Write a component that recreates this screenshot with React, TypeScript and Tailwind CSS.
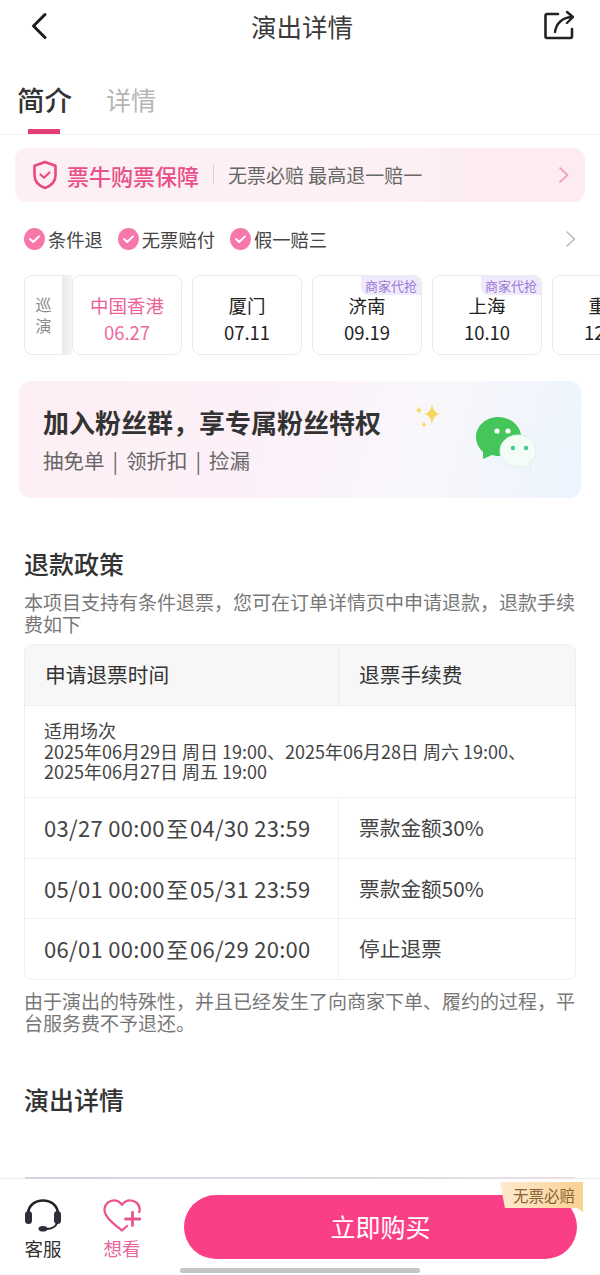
import React from "react";

const font = { fontFamily: '"Noto Sans CJK SC", "Noto Sans", sans-serif' };

function Check() {
  return (
    <svg width="21" height="22" viewBox="0 0 21 22" className="shrink-0">
      <ellipse cx="10.500" cy="11" rx="10.500" ry="11" fill="#f777ab" />
      <path d="M6 11l3.200 3 5.800-5.600" fill="none" stroke="#fff" strokeWidth="2" strokeLinecap="round" strokeLinejoin="round" />
    </svg>
  );
}

function Tag({ text }: { text: string }) {
  return (
    <div className="flex items-center gap-[3px]">
      <Check />
      <span className="text-[18.300px] leading-6 text-[#444]">{text}</span>
    </div>
  );
}

function City({ name, date, active, badge }: { name: string; date: string; active?: boolean; badge?: boolean }) {
  return (
    <div className="relative flex h-[80px] w-[110px] shrink-0 flex-col items-center rounded-lg border border-[#ebebeb] bg-white pt-[16px]">
      {badge && (
        <div className="absolute right-0 top-0 rounded-bl-lg rounded-tr-lg bg-[#efe9fb] px-[4px] text-[13px] leading-[19px] text-[#9a7bd6]">商家代抢</div>
      )}
      <div className={active ? "text-[18.500px] leading-[26px] text-[#ec5f99]" : "text-[18.500px] leading-[26px] text-[#222]"}>{name}</div>
      <div className={active ? "mt-[1px] text-[18.500px] leading-[26px] text-[#ec6b9f]" : "mt-[1px] text-[18.500px] leading-[26px] text-[#222]"}>{date}</div>
    </div>
  );
}

function Row({ from, to, fee }: { from: string; to: string; fee: string }) {
  return (
    <div className="flex h-[60.500px] items-center border-t border-[#f0f0f0]">
      <div className="flex h-full w-[314px] items-center border-r border-[#f0f0f0] pl-[19px] text-[22px] tracking-[0.300px] text-[#444]">
        <span>{from}</span>
        <span className="mx-[1.500px]">至</span>
        <span>{to}</span>
      </div>
      <div className="pl-[20px] text-[20.700px] text-[#444]">{fee}</div>
    </div>
  );
}

export default function App() {
  return (
    <div style={font} className="relative flex h-[1275px] w-[600px] flex-col overflow-hidden bg-white">
      {/* Nav */}
      <div className="flex h-[54px] items-center justify-between pb-[3px] pl-[30px] pr-[26px]">
        <div className="w-[30px]">
          <svg width="20" height="28" viewBox="0 0 20 28">
            <path d="M15 2.500L3.500 14 15 25.500" fill="none" stroke="#1c1c1c" strokeWidth="3" strokeLinecap="round" strokeLinejoin="round" />
          </svg>
        </div>
        <div className="text-[25.500px] leading-8 text-[#3a3a3a]">演出详情</div>
        <svg width="30" height="30" viewBox="0 0 30 30">
          <path d="M14 3H3a1.500 1.500 0 0 0-1.500 1.500v21A1.500 1.500 0 0 0 3 27h23.500a1.500 1.500 0 0 0 1.500-1.500V18" fill="none" stroke="#222" strokeWidth="2.600" strokeLinecap="round" />
          <path d="M11 21c1-8 7-15 18-15M23 1l6 5-6 6" fill="none" stroke="#222" strokeWidth="2.400" strokeLinecap="round" strokeLinejoin="round" />
        </svg>
      </div>

      {/* Tabs */}
      <div className="relative flex h-[81px] items-start border-b border-[#f1f1f1] pl-[17px] pt-[26px]">
        <div className="text-[27.500px] font-medium leading-[38px] text-[#333]">简介</div>
        <div className="ml-[34px] mt-[1px] text-[25px] leading-[36px] text-[#b5b5b5]">详情</div>
        <div className="absolute bottom-0 left-[28px] h-[5px] w-[32px] bg-[#e33d78]" />
      </div>

      {/* Guarantee banner */}
      <div className="mx-[15px] mt-[13px] flex h-[54px] items-center rounded-xl bg-gradient-to-r from-[#fdeff4] via-[#fdf1f5] to-[#fdebf0] pl-[17px] pr-[15px]">
        <svg width="26" height="30" viewBox="0 0 26 30" className="shrink-0">
          <path d="M13 2l10.500 3.800v9.500c0 6-4.500 10.500-10.500 12.700C7 25.800 2.500 21.300 2.500 15.300V5.800z" fill="none" stroke="#e84a80" strokeWidth="2.600" strokeLinejoin="round" />
          <path d="M8.500 14.500l3.500 3.200 5.500-5.200" fill="none" stroke="#e84a80" strokeWidth="2.200" strokeLinecap="round" strokeLinejoin="round" />
        </svg>
        <div className="ml-[9px] text-[22px] font-medium leading-8 text-[#e8508a]">票牛购票保障</div>
        <div className="ml-[14px] h-[20px] w-px bg-[#dccdd2]" />
        <div className="ml-[14px] text-[19px] leading-7 text-[#666]">无票必赔 最高退一赔一</div>
        <svg width="12" height="18" viewBox="0 0 12 18" className="ml-auto">
          <path d="M2 2l7.500 7L2 16" fill="none" stroke="#f3a3bd" strokeWidth="1.800" strokeLinecap="round" strokeLinejoin="round" />
        </svg>
      </div>

      {/* Tags */}
      <div className="mt-[25px] flex h-[24px] items-center pl-[24px] pr-[23px]">
        <div className="flex gap-[15px]">
          <Tag text="条件退" />
          <Tag text="无票赔付" />
          <Tag text="假一赔三" />
        </div>
        <svg width="12" height="18" viewBox="0 0 12 18" className="ml-auto">
          <path d="M2 2l7.500 7L2 16" fill="none" stroke="#b9b9b9" strokeWidth="1.500" strokeLinecap="round" strokeLinejoin="round" />
        </svg>
      </div>

      {/* Cities */}
      <div className="mt-[24px] flex items-stretch overflow-hidden pl-[24px]">
        <div className="flex h-[80px] w-[38px] shrink-0 flex-col items-center justify-center rounded-l-lg border border-r-0 border-[#ebebeb] text-[16px] leading-[21px] text-[#8a8a8a]">
          <span>巡</span>
          <span>演</span>
        </div>
        <div className="h-[80px] w-[10px] shrink-0 bg-gradient-to-r from-[#e9e9e9] to-[#f6f6f6]" />
        <div className="flex gap-[10px]">
          <City name="中国香港" date="06.27" active />
          <City name="厦门" date="07.11" />
          <City name="济南" date="09.19" badge />
          <City name="上海" date="10.10" badge />
          <City name="重庆" date="12.05" />
        </div>
      </div>

      {/* Fan group */}
      <div className="relative mx-[19px] mt-[26px] h-[117px] rounded-xl bg-[linear-gradient(105deg,#fdeff3_0%,#fdf0f8_40%,#f9f7fb_70%,#ecf4fd_100%)] pl-[24px] pt-[23px]">
        <div className="text-[26px] font-bold leading-[36px] text-[#333]">加入粉丝群，享专属粉丝特权</div>
        <div className="mt-[5px] flex text-[20.500px] leading-[30px] text-[#666]">
          <span>抽免单</span>
          <span className="mx-[8px]">|</span>
          <span>领折扣</span>
          <span className="mx-[8px]">|</span>
          <span>捡漏</span>
        </div>
        <svg width="30" height="30" viewBox="0 0 30 30" className="absolute left-[395px] top-[21px]">
          <path d="M18 2c1 6 3 8.500 8 10-5 1.500-7 4-8 10-1-6-3-8.500-8-10 5-1.500 7-4 8-10z" fill="#f6d860" />
          <path d="M5 4c.4 2.500 1.200 3.500 3.300 4.200C6.200 8.900 5.400 9.900 5 12.500 4.600 9.900 3.800 8.900 1.700 8.200 3.800 7.500 4.600 6.500 5 4z" fill="#f6d860" />
          <path d="M10 19c.4 2.200 1 3 2.900 3.600-1.900.6-2.500 1.400-2.900 3.600-.4-2.200-1-3-2.900-3.600 1.900-.6 2.500-1.400 2.900-3.600z" fill="#f6d860" />
        </svg>
        <svg width="64" height="58" viewBox="0 0 64 58" className="absolute left-[455px] top-[35px]">
          <path d="M24 1C12 1 2 10 2 21c0 6 3 11.500 7 15v7l9-4c2 .5 4 1 6.500 1C37 40 47 31 47 20.500S37 1 24 1z" fill="#45c65a" />
          <circle cx="23" cy="15" r="2.600" fill="#fff" />
          <circle cx="34" cy="15" r="2.600" fill="#fff" />
          <path d="M44 19c-10 0-18 7-18 16s8 16 18 16c2 0 3.500-.3 5-.8l7.500 3.300-1-7c4-3 6.500-7 6.500-11.500 0-9-8-16-18-16z" fill="#f4fcf8" stroke="#d8f3e6" strokeWidth="1" />
          <circle cx="39" cy="32" r="2.200" fill="#3ecb8e" />
          <circle cx="52" cy="32" r="2.200" fill="#3ecb8e" />
        </svg>
      </div>

      {/* Refund policy */}
      <div className="px-[24px]">
        <div className="mt-[47px] text-[25px] font-medium leading-[36px] text-[#333]">退款政策</div>
        <div className="mt-[10px] w-[552px] text-[19px] leading-[22px] text-[#777]">本项目支持有条件退票，您可在订单详情页中申请退款，退款手续费如下</div>

        <div className="mt-[9px] w-[552px] overflow-hidden rounded-lg border border-[#f0f0f0]">
          <div className="flex h-[60px] items-center bg-[#f7f7f7] text-[20.700px] text-[#333]">
            <div className="flex h-full w-[314px] items-center border-r border-[#ededed] pl-[20px]">申请退票时间</div>
            <div className="pl-[20px]">退票手续费</div>
          </div>
          <div className="h-[92px] border-t border-[#f0f0f0] px-[19px] pt-[14px] text-[18px] leading-[20.500px] text-[#444]">
            <div>适用场次</div>
            <div>2025年06月29日 周日 19:00、2025年06月28日 周六 19:00、</div>
            <div>2025年06月27日 周五 19:00</div>
          </div>
          <Row from="03/27 00:00" to="04/30 23:59" fee="票款金额30%" />
          <Row from="05/01 00:00" to="05/31 23:59" fee="票款金额50%" />
          <Row from="06/01 00:00" to="06/29 20:00" fee="停止退票" />
        </div>

        <div className="mt-[10px] w-[552px] text-[19px] leading-[22px] text-[#777]">由于演出的特殊性，并且已经发生了向商家下单、履约的过程，平台服务费不予退还。</div>
        <div className="mt-[47px] text-[25px] font-medium leading-[36px] text-[#333]">演出详情</div>
      </div>

      {/* Bottom bar */}
      <div className="absolute inset-x-0 bottom-0 h-[97px] border-t border-[#eeeeee] bg-white">
        <div className="absolute left-[25px] top-[-2px] h-[2px] w-[550px] bg-gradient-to-r from-[#d4d2e4] to-[#e9dfe4]" />
        <div className="flex items-start">
          <div className="ml-[24px] mt-[20px] flex w-[38px] flex-col items-center">
            <svg width="38" height="33" viewBox="0 0 38 33">
              <path d="M4 14C5 6 11 1.500 19 1.500S33 6 34 14" fill="none" stroke="#222" strokeWidth="2.600" strokeLinecap="round" />
              <rect x="1" y="12" width="7" height="13" rx="3.500" fill="#2c2f3a" />
              <rect x="30" y="12" width="7" height="13" rx="3.500" fill="#2c2f3a" />
              <path d="M33 24c-1 3.500-4 5.500-10 6" fill="none" stroke="#222" strokeWidth="1.800" strokeLinecap="round" />
              <ellipse cx="19" cy="29.800" rx="4.500" ry="2.800" fill="#2c2f3a" />
            </svg>
            <span className="mt-[3px] text-[18.500px] leading-[26px] text-[#333]">客服</span>
          </div>
          <div className="ml-[41px] mt-[20px] flex w-[38px] flex-col items-center">
            <svg width="38" height="33" viewBox="0 0 38 33">
              <path d="M24 27l-5 4.500C11 25 1 18 1.500 10 2 4.500 6.500 1.300 11 1.300c3.500 0 6 1.700 8 4.500 2-2.800 4.500-4.500 8-4.500 5 0 9.700 3.700 9.700 9 0 .8-.1 1.700-.4 2.700" fill="none" stroke="#e9558f" strokeWidth="2.300" strokeLinecap="round" strokeLinejoin="round" />
              <path d="M29.500 13.500v13M22.500 20h14.500" fill="none" stroke="#e9558f" strokeWidth="2.800" strokeLinecap="round" />
            </svg>
            <span className="mt-[3px] text-[18.500px] leading-[26px] text-[#e9659c]">想看</span>
          </div>
          <div className="relative ml-[43px] mt-[16px] flex h-[64px] w-[393px] items-center justify-center rounded-full bg-[#fb3f86] text-[25px] text-[#fff]">
            立即购买
            <div className="absolute -top-[13px] right-[-6px] h-[30px] bg-gradient-to-r from-[#fdeacf] to-[#fbd193] pl-[13px] pr-[8px] text-[15.500px] leading-[27px] text-[#8a6233] [clip-path:polygon(0_0,100%_0,100%_100%,93%_87%,6%_87%)]">无票必赔</div>
          </div>
        </div>
        <div className="absolute bottom-[2px] left-[180px] h-[5px] w-[240px] rounded-full bg-[#c4c4c4]" />
      </div>
    </div>
  );
}
